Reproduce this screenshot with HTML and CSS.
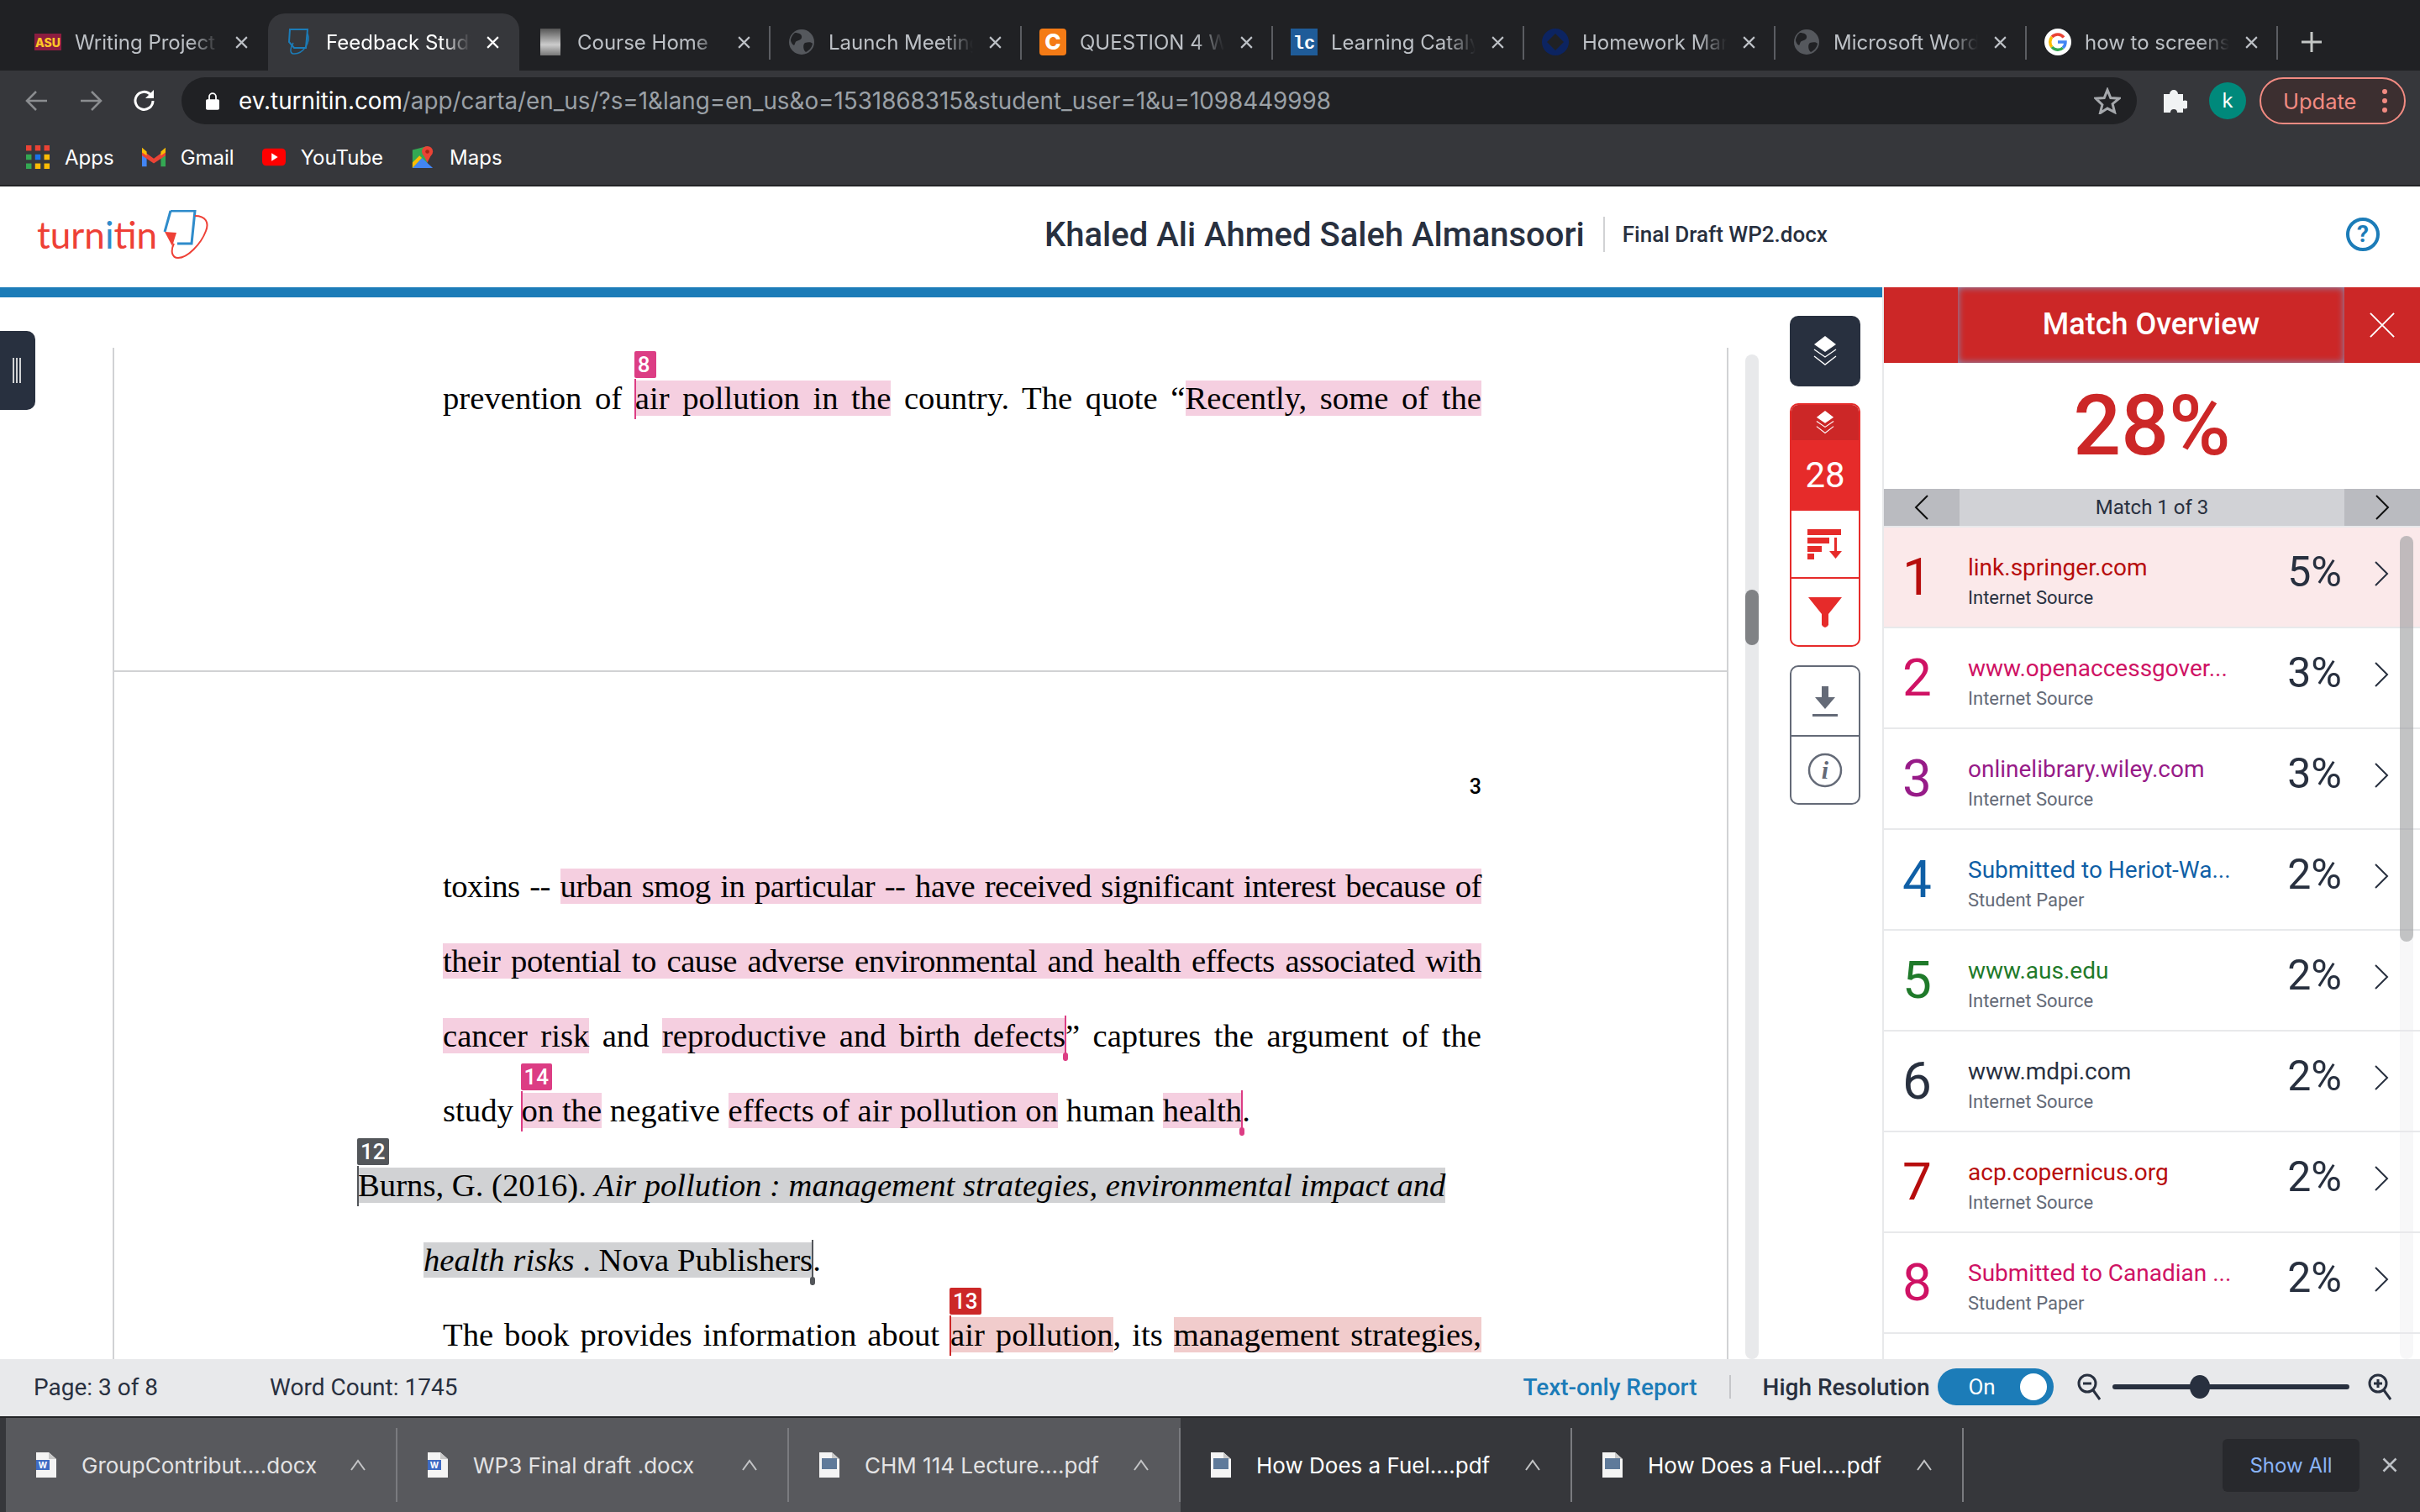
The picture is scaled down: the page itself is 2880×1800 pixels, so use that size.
FILE: index.html
```html
<!DOCTYPE html>
<html lang="en">
<head>
    <meta charset="UTF-8">
    <title>Feedback Studio</title>
    <link rel="stylesheet" href="styles.css">
</head>
<body>
    <svg class="defs" width="0" height="0">
        <symbol id="i-x" viewBox="0 0 16 16"><path d="M2 2l12 12M14 2L2 14" fill="none" stroke="currentColor" stroke-width="2"/></symbol>
        <symbol id="i-globe" viewBox="0 0 32 32"><circle cx="16" cy="16" r="15" fill="#55585d"/><path d="M8 5c5 0 9 2 8 6s-7 2-8 7-5-2-5-4 2-7 5-9zM20 17c4-1 8-1 9 1-1 5-4 8-8 10-3-2-4-9-1-11z" fill="#202124"/></symbol>
        <symbol id="i-chev" viewBox="0 0 20 32"><path d="M3 2l14 14L3 30" fill="none" stroke="currentColor" stroke-width="2"/></symbol>
        <symbol id="i-layers" viewBox="0 0 28 36"><path d="M14 0l13 10-13 9-13-9z" fill="#fff"/><path d="M1 16l13 9 13-9M1 24l13 10 13-10" fill="none" stroke="#fff" stroke-width="1.4"/></symbol>
        <symbol id="i-doc" viewBox="0 0 24 30"><path d="M0 0h15l9 8v22H0z" fill="#f4f4f4"/><path d="M15 0l9 8h-9z" fill="#c9c9c9"/></symbol>
    </svg>

    <!-- browser chrome -->
    <header class="chrome">
        <div class="tabstrip">
            <div class="tab">
                <svg class="favicon" viewBox="0 0 32 32"><rect y="6" width="32" height="20" fill="#8c1d40"/><text x="16" y="22" text-anchor="middle" class="asu-mark">ASU</text></svg>
                <span class="tab-title">Writing Project</span>
                <svg class="tab-x"><use href="#i-x"/></svg>
            </div>
            <div class="tab active">
                <svg class="favicon" viewBox="0 0 32 32"><path d="M5 1h21l-2 22H10L4 16z" fill="none" stroke="#1c7cb8" stroke-width="2"/><path d="M26 6c4 10-5 25-17 24-5-1-3-8 0-13" fill="none" stroke="#1c7cb8" stroke-width="1.5"/></svg>
                <span class="tab-title">Feedback Studio</span>
                <svg class="tab-x"><use href="#i-x"/></svg>
            </div>
            <div class="tab">
                <svg class="favicon" viewBox="0 0 32 32"><defs><linearGradient id="g-book" x1="0" y1="0" x2="0" y2="1"><stop offset="0" stop-color="#555"/><stop offset=".6" stop-color="#ccc"/><stop offset="1" stop-color="#777"/></linearGradient></defs><rect x="4" y="0" width="24" height="32" fill="url(#g-book)"/></svg>
                <span class="tab-title">Course Home</span>
                <svg class="tab-x"><use href="#i-x"/></svg>
            </div>
            <div class="tab">
                <svg class="favicon"><use href="#i-globe"/></svg>
                <span class="tab-title">Launch Meeting</span>
                <svg class="tab-x"><use href="#i-x"/></svg>
            </div>
            <div class="tab">
                <svg class="favicon" viewBox="0 0 32 32"><rect width="32" height="32" rx="4" fill="#f47b16"/><text x="16" y="25" text-anchor="middle" class="c-mark">C</text></svg>
                <span class="tab-title">QUESTION 4 WP</span>
                <svg class="tab-x"><use href="#i-x"/></svg>
            </div>
            <div class="tab">
                <svg class="favicon" viewBox="0 0 32 32"><rect width="32" height="32" fill="#1f5c99"/><text x="16" y="24" text-anchor="middle" class="lc-mark">lc</text></svg>
                <span class="tab-title">Learning Catalytics</span>
                <svg class="tab-x"><use href="#i-x"/></svg>
            </div>
            <div class="tab">
                <svg class="favicon" viewBox="0 0 32 32"><circle cx="16" cy="16" r="16" fill="#0c2461"/><path d="M16 6l10 10-10 10L6 16z" fill="#202124"/></svg>
                <span class="tab-title">Homework Market</span>
                <svg class="tab-x"><use href="#i-x"/></svg>
            </div>
            <div class="tab">
                <svg class="favicon"><use href="#i-globe"/></svg>
                <span class="tab-title">Microsoft Word</span>
                <svg class="tab-x"><use href="#i-x"/></svg>
            </div>
            <div class="tab">
                <svg class="favicon" viewBox="0 0 32 32"><circle cx="16" cy="16" r="16" fill="#fff"/><path d="M23 10.500A9 9 0 0 0 9 10" fill="none" stroke="#ea4335" stroke-width="3.500"/><path d="M9 10a9 9 0 0 0 0 12" fill="none" stroke="#fbbc05" stroke-width="3.500"/><path d="M9 22a9 9 0 0 0 13 1" fill="none" stroke="#34a853" stroke-width="3.500"/><path d="M22 23a9 9 0 0 0 3-7h-9" fill="none" stroke="#4285f4" stroke-width="3.500"/></svg>
                <span class="tab-title">how to screenshot</span>
                <svg class="tab-x"><use href="#i-x"/></svg>
            </div>
            <svg class="new-tab" viewBox="0 0 24 24"><path d="M12 0v24M0 12h24" stroke="#c4c7c5" stroke-width="3"/></svg>
        </div>

        <div class="toolbar">
            <svg class="nav-icon dim" viewBox="0 0 28 28"><path d="M26 14H3M13 3L2 14l11 11" fill="none" stroke="currentColor" stroke-width="2.500"/></svg>
            <svg class="nav-icon dim" viewBox="0 0 28 28"><path d="M2 14h23M15 3l11 11-11 11" fill="none" stroke="currentColor" stroke-width="2.500"/></svg>
            <svg class="nav-icon" viewBox="0 0 28 28"><path d="M24 14a10.500 10.500 0 1 1-3-7.500" fill="none" stroke="currentColor" stroke-width="3"/><path d="M25 1v10H15z" fill="currentColor"/></svg>
            <div class="omnibox">
                <svg class="lock" viewBox="0 0 18 24"><path d="M4.500 11V6.500a4.500 4.500 0 0 1 9 0V11" fill="none" stroke="#fff" stroke-width="2"/><rect x="0" y="10" width="18" height="14" rx="2" fill="#fff"/></svg>
                <span class="url"><b>ev.turnitin.com</b>/app/carta/en_us/?s=1&amp;lang=en_us&amp;o=1531868315&amp;student_user=1&amp;u=1098449998</span>
                <svg class="star" viewBox="0 0 32 32"><path d="M16 3l3.800 9.500 10.200.7-7.900 6.500 2.500 9.900L16 25.100l-8.600 5.500 2.500-9.900L2 13.200l10.200-.7z" fill="none" stroke="#a5a8ac" stroke-width="3"/></svg>
            </div>
            <svg class="puzzle" viewBox="0 0 30 32"><path d="M2 8h7a5 5 0 1 1 10 0h6v8a5 5 0 1 1 0 9v5h-7a4 4 0 0 0-8 0H2z" fill="#f1f3f4"/></svg>
            <span class="avatar">k</span>
            <div class="update">
                <span>Update</span>
                <span class="dots"><i></i><i></i><i></i></span>
            </div>
        </div>

        <div class="bookmarks">
            <div class="bookmark">
                <svg class="bm-icon" viewBox="0 0 26 26"><g fill="#ea4335"><rect width="6" height="6"/><rect x="10" width="6" height="6"/><rect x="20" width="6" height="6"/></g><g fill="#1a73e8"><rect y="10" width="6" height="6" fill="#34a853"/><rect x="10" y="10" width="6" height="6"/><rect x="20" y="10" width="6" height="6" fill="#fbbc05"/></g><g fill="#fbbc05"><rect y="20" width="6" height="6" fill="#34a853"/><rect x="10" y="20" width="6" height="6"/><rect x="20" y="20" width="6" height="6"/></g></svg>
                Apps
            </div>
            <div class="bookmark">
                <svg class="bm-icon" viewBox="0 0 30 24"><path d="M0 3v21h6V10z" fill="#4285f4"/><path d="M30 3v21h-6V10z" fill="#34a853"/><path d="M0 3l15 11L30 3v7L15 20 0 10z" fill="#ea4335"/><path d="M0 0l6 5v5L0 6zM30 0l-6 5v5l6-4z" fill="#fbbc05"/></svg>
                Gmail
            </div>
            <div class="bookmark">
                <svg class="bm-icon" viewBox="0 0 30 22"><rect width="30" height="22" rx="5" fill="#f00"/><path d="M12 6l8 5-8 5z" fill="#fff"/></svg>
                YouTube
            </div>
            <div class="bookmark">
                <svg class="bm-icon" viewBox="0 0 28 30"><path d="M1 6l19-5v26L1 29z" fill="#34a853"/><path d="M1 29l12-13 14 13z" fill="#4285f4"/><path d="M1 29l12-13-3-3L1 22z" fill="#fbbc05"/><circle cx="20" cy="8" r="7" fill="#ea4335"/><path d="M15 12l5 10 5-10z" fill="#ea4335"/><circle cx="20" cy="8" r="2.500" fill="#a52714"/></svg>
                Maps
            </div>
        </div>
    </header>

    <!-- turnitin header -->
    <div class="app-head">
        <div class="logo">
            <span class="logo-word">turn<em>i</em>tin</span>
            <svg class="logo-mark" viewBox="0 0 54 58"><path d="M9 1h29l-4 39H17" fill="none" stroke="#2f8ccb" stroke-width="3"/><path d="M9 1L2 26" fill="none" stroke="#2f8ccb" stroke-width="3"/><path d="M2 26l14 1-5 16z" fill="#ee4036"/><path d="M38 7c13 0 17 8 13 18-6 16-22 32-33 32-8 0-9-9-5-17" fill="none" stroke="#ee4036" stroke-width="2"/></svg>
        </div>
        <div class="doc-title">
            <span class="author">Khaled Ali Ahmed Saleh Almansoori</span>
            <span class="filename">Final Draft WP2.docx</span>
        </div>
        <span class="help">?</span>
    </div>

    <div class="workspace">
        <div class="handle"><i></i><i></i><i></i></div>

        <main class="doc-area">
            <div class="paper">
                <section class="page-end">
                    <p class="line"><span>prevention of</span> <span class="match pink"><span class="badge pink-b">8</span>air pollution in the</span> country. The quote “<span class="match pink plain">Recently, some of the</span></p>
                </section>
                <section class="page-next">
                    <div class="page-no">3</div>
                    <p class="line tight">toxins -- <span class="match pink plain">urban smog in particular -- have received significant interest because of</span></p>
                    <p class="line tight"><span class="match pink plain">their potential to cause adverse environmental and health effects associated with</span></p>
                    <p class="line"><span class="match pink plain">cancer risk</span> and <span class="match pink plain end">reproductive and birth defects</span>” captures the argument of the</p>
                    <p class="line free">study <span class="match pink"><span class="badge pink-b">14</span>on the</span> negative <span class="match pink plain">effects of air pollution on</span> human <span class="match pink plain end">health</span>.</p>
                    <p class="line free ref"><span class="match grey"><span class="badge grey-b">12</span>Burns, G. (2016). <i>Air pollution : management strategies, environmental impact and</i></span></p>
                    <p class="line free ref-2"><span class="match grey plain end"><i>health risks</i> . Nova Publishers</span>.</p>
                    <p class="line">The book provides information about <span class="match red"><span class="badge red-b">13</span>air pollution</span>, its <span class="match red plain">management strategies,</span></p>
                </section>
            </div>
            <div class="doc-scroll"><div class="doc-thumb"></div></div>
            <div class="rail">
                <div class="rail-btn rail-dark"><svg class="rail-layers"><use href="#i-layers"/></svg></div>
                <div class="rail-group rail-red">
                    <div class="rail-cell cell-layers"><svg class="rail-layers small"><use href="#i-layers"/></svg></div>
                    <div class="rail-cell cell-score">28</div>
                    <div class="rail-cell">
                        <svg class="rail-svg" viewBox="0 0 42 36"><g fill="#e62b2a"><rect width="40" height="7"/><rect y="10" width="26" height="7"/><rect y="20" width="17" height="7"/><rect y="29" width="8" height="7"/><path d="M32 10h3v16h6l-7.500 9L26 26h6z"/></g></svg>
                    </div>
                    <div class="rail-cell">
                        <svg class="rail-svg" viewBox="0 0 42 36"><path d="M1 0h40L25 20v13q-4 6-8 0V20z" fill="#e62b2a"/></svg>
                    </div>
                </div>
                <div class="rail-group rail-grey">
                    <div class="rail-cell">
                        <svg class="rail-svg" viewBox="0 0 32 36"><path d="M12 0h8v13h8L16 27 4 13h8z" fill="#646a77"/><rect x="1" y="33" width="30" height="3" fill="#646a77"/></svg>
                    </div>
                    <div class="rail-cell">
                        <svg class="rail-info" viewBox="0 0 42 42"><circle cx="21" cy="21" r="19" fill="none" stroke="#646a77" stroke-width="2.500"/><text x="21" y="31" text-anchor="middle" class="info-i">i</text></svg>
                    </div>
                </div>
            </div>
        </main>

        <aside class="panel">
            <div class="panel-head">
                <div class="panel-title">Match Overview</div>
                <svg class="panel-close" viewBox="0 0 32 32"><path d="M1 1l30 30M31 1L1 31" fill="none" stroke="#fff" stroke-width="2"/></svg>
            </div>
            <div class="score">28%</div>
            <div class="pager">
                <div class="pager-btn"><svg class="pager-chev flip"><use href="#i-chev"/></svg></div>
                <div class="pager-label">Match 1 of 3</div>
                <div class="pager-btn"><svg class="pager-chev"><use href="#i-chev"/></svg></div>
            </div>
            <div class="matches">
                <div class="match-row current c1"><span class="num">1</span><div class="info"><div class="name">link.springer.com</div><div class="src">Internet Source</div></div><span class="pct">5%</span><svg class="row-chev"><use href="#i-chev"/></svg></div>
                <div class="match-row c2"><span class="num">2</span><div class="info"><div class="name">www.openaccessgover...</div><div class="src">Internet Source</div></div><span class="pct">3%</span><svg class="row-chev"><use href="#i-chev"/></svg></div>
                <div class="match-row c3"><span class="num">3</span><div class="info"><div class="name">onlinelibrary.wiley.com</div><div class="src">Internet Source</div></div><span class="pct">3%</span><svg class="row-chev"><use href="#i-chev"/></svg></div>
                <div class="match-row c4"><span class="num">4</span><div class="info"><div class="name">Submitted to Heriot-Wa...</div><div class="src">Student Paper</div></div><span class="pct">2%</span><svg class="row-chev"><use href="#i-chev"/></svg></div>
                <div class="match-row c5"><span class="num">5</span><div class="info"><div class="name">www.aus.edu</div><div class="src">Internet Source</div></div><span class="pct">2%</span><svg class="row-chev"><use href="#i-chev"/></svg></div>
                <div class="match-row c6"><span class="num">6</span><div class="info"><div class="name">www.mdpi.com</div><div class="src">Internet Source</div></div><span class="pct">2%</span><svg class="row-chev"><use href="#i-chev"/></svg></div>
                <div class="match-row c7"><span class="num">7</span><div class="info"><div class="name">acp.copernicus.org</div><div class="src">Internet Source</div></div><span class="pct">2%</span><svg class="row-chev"><use href="#i-chev"/></svg></div>
                <div class="match-row c8"><span class="num">8</span><div class="info"><div class="name">Submitted to Canadian ...</div><div class="src">Student Paper</div></div><span class="pct">2%</span><svg class="row-chev"><use href="#i-chev"/></svg></div>
                <div class="list-scroll"><div class="list-thumb"></div></div>
            </div>
        </aside>
    </div>

    <!-- status bar -->
    <div class="statusbar">
        <span class="stat-page">Page: 3 of 8</span>
        <span class="stat-words">Word Count: 1745</span>
        <span class="text-only">Text-only Report</span>
        <span class="stat-sep"></span>
        <span class="hi-res">High Resolution</span>
        <div class="toggle"><span>On</span><i></i></div>
        <svg class="zoom-icon" viewBox="0 0 28 32"><circle cx="12" cy="12" r="10" fill="none" stroke="#28303f" stroke-width="3"/><path d="M7 12h10" stroke="#28303f" stroke-width="3"/><path d="M19 20l8 11" stroke="#28303f" stroke-width="3"/></svg>
        <div class="slider"><i></i></div>
        <svg class="zoom-icon" viewBox="0 0 28 32"><circle cx="12" cy="12" r="10" fill="none" stroke="#28303f" stroke-width="3"/><path d="M7 12h10M12 7v10" stroke="#28303f" stroke-width="3"/><path d="M19 20l8 11" stroke="#28303f" stroke-width="3"/></svg>
    </div>

    <!-- downloads -->
    <footer class="downloads">
        <div class="dl-item lit">
            <svg class="dl-icon"><use href="#i-doc"/></svg><span class="word-badge">W</span>
            <span class="dl-name">GroupContribut....docx</span>
            <svg class="caret" viewBox="0 0 20 14"><path d="M2 13l8-11 8 11" fill="none" stroke="currentColor" stroke-width="2"/></svg>
        </div>
        <div class="dl-item lit">
            <svg class="dl-icon"><use href="#i-doc"/></svg><span class="word-badge">W</span>
            <span class="dl-name">WP3 Final draft .docx</span>
            <svg class="caret" viewBox="0 0 20 14"><path d="M2 13l8-11 8 11" fill="none" stroke="currentColor" stroke-width="2"/></svg>
        </div>
        <div class="dl-item lit">
            <svg class="dl-icon"><use href="#i-doc"/></svg><span class="pdf-badge"></span>
            <span class="dl-name">CHM 114 Lecture....pdf</span>
            <svg class="caret" viewBox="0 0 20 14"><path d="M2 13l8-11 8 11" fill="none" stroke="currentColor" stroke-width="2"/></svg>
        </div>
        <div class="dl-item">
            <svg class="dl-icon"><use href="#i-doc"/></svg><span class="pdf-badge"></span>
            <span class="dl-name">How Does a Fuel....pdf</span>
            <svg class="caret" viewBox="0 0 20 14"><path d="M2 13l8-11 8 11" fill="none" stroke="currentColor" stroke-width="2"/></svg>
        </div>
        <div class="dl-item">
            <svg class="dl-icon"><use href="#i-doc"/></svg><span class="pdf-badge"></span>
            <span class="dl-name">How Does a Fuel....pdf</span>
            <svg class="caret" viewBox="0 0 20 14"><path d="M2 13l8-11 8 11" fill="none" stroke="currentColor" stroke-width="2"/></svg>
        </div>
        <div class="show-all">Show All</div>
        <svg class="dl-close"><use href="#i-x"/></svg>
    </footer>
</body>
</html>
```

FILE: styles.css
```css
* {
    box-sizing: border-box;
}
html, body {
    margin: 0;
    height: 100%;
}
body {
    width: 2880px;
    height: 1800px;
    display: flex;
    flex-direction: column;
    overflow: hidden;
    font-family: Roboto, sans-serif;
    background-color: #fff;
    color: #28303f;
}
.defs {
    position: absolute;
}

/* Browser chrome */
.chrome {
    height: 222px;
    flex: none;
    background-color: #36373b;
    border-bottom: 2px solid #232426;
    font-family: Inter, sans-serif;
    color: #fff;
}
.tabstrip {
    height: 84px;
    display: flex;
    align-items: flex-end;
    padding-left: 20px;
    background-color: #202124;
}
.tab {
    position: relative;
    width: 299px;
    height: 68px;
    display: flex;
    align-items: center;
    padding: 0 23px 0 21px;
    color: #bdc1c6;
}
.tab::after {
    content: "";
    position: absolute;
    right: 0;
    top: 15px;
    height: 40px;
    border-right: 2px solid #5b5d62;
}
.tab.active {
    background-color: #36373b;
    border-radius: 20px 20px 0 0;
    color: #fff;
}
.tab.active::after,
.tab:first-child::after {
    display: none;
}
.favicon {
    width: 32px;
    height: 32px;
    flex: none;
}
.tab-title {
    width: 172px;
    margin-left: 16px;
    font-size: 24px;
    white-space: nowrap;
    overflow: hidden;
    -webkit-mask-image: linear-gradient(to right, #000 80%, transparent);
    mask-image: linear-gradient(to right, #000 80%, transparent);
}
.tab-x {
    width: 17px;
    height: 17px;
    margin-left: auto;
}
.new-tab {
    width: 24px;
    height: 24px;
    margin: 0 0 22px 28px;
    align-self: flex-end;
}
.asu-mark {
    font: 800 14px Inter, sans-serif;
    fill: #ffc627;
}
.c-mark {
    font: 800 26px Inter, sans-serif;
    fill: #fff;
}
.lc-mark {
    font: 700 22px "Liberation Mono", monospace;
    fill: #fff;
}

.toolbar {
    height: 64px;
    display: flex;
    align-items: flex-start;
    padding: 8px 17px 0 30px;
}
.nav-icon {
    width: 28px;
    height: 28px;
    margin: 14px 36px 0 0;
    flex: none;
    color: #fff;
}
.nav-icon.dim {
    color: #8b8d90;
}
.omnibox {
    width: 2327px;
    height: 56px;
    margin-left: -6px;
    display: flex;
    align-items: center;
    padding: 0 19px 0 29px;
    background-color: #202124;
    border-radius: 28px;
}
.lock {
    width: 16px;
    height: 24px;
    flex: none;
}
.url {
    margin-left: 23px;
    font-size: 27.8px;
    color: #9aa0a6;
    white-space: nowrap;
}
.url b {
    font-weight: 400;
    color: #fff;
}
.star {
    width: 32px;
    height: 32px;
    margin-left: auto;
}
.puzzle {
    width: 30px;
    height: 32px;
    margin: 12px 0 0 30px;
    flex: none;
}
.avatar {
    width: 44px;
    height: 44px;
    margin: 6px 0 0 26px;
    flex: none;
    border-radius: 50%;
    background-color: #00897b;
    font-size: 24px;
    line-height: 44px;
    text-align: center;
}
.update {
    width: 174px;
    height: 56px;
    margin-left: 16px;
    flex: none;
    display: flex;
    align-items: center;
    padding: 0 20px 0 26px;
    border: 2px solid #f28b82;
    border-radius: 28px;
    background-color: #3c2f30;
    color: #f28b82;
    font-size: 25.5px;
}
.dots {
    margin-left: auto;
    display: flex;
    flex-direction: column;
    gap: 5px;
}
.dots i {
    width: 6px;
    height: 6px;
    border-radius: 50%;
    background-color: #f28b82;
}

.bookmarks {
    height: 72px;
    display: flex;
    align-items: center;
    padding: 6px 0 0 31px;
    gap: 33px;
    font-size: 24px;
}
.bookmark {
    display: flex;
    align-items: center;
    gap: 18px;
}
.bm-icon {
    width: 28px;
    height: 28px;
    flex: none;
}

/* Turnitin header */
.app-head {
    position: relative;
    height: 132px;
    flex: none;
    display: flex;
    align-items: center;
    padding-bottom: 6px;
    border-bottom: 12px solid #1c7cb8;
}
.logo {
    width: 251px;
    display: flex;
    align-items: center;
    margin-left: 44px;
}
.logo-word {
    font: 400 44px Lato, sans-serif;
    color: #ee4036;
}
.logo-word em {
    font-style: normal;
    color: #2f8ccb;
}
.logo-mark {
    width: 54px;
    height: 58px;
    margin-left: 7px;
}
.doc-title {
    display: flex;
    align-items: center;
    margin-left: 948px;
}
.author {
    font-size: 40px;
    font-weight: 500;
    white-space: nowrap;
}
.filename {
    margin-left: 22px;
    padding-left: 21px;
    border-left: 2px solid #d1d2d4;
    font-size: 26px;
    font-weight: 500;
    line-height: 42px;
    white-space: nowrap;
}
.help {
    width: 40px;
    height: 40px;
    margin-left: auto;
    margin-right: 48px;
    border: 4px solid #1c7cb8;
    border-radius: 50%;
    color: #1c7cb8;
    font-size: 28px;
    font-weight: 700;
    line-height: 32px;
    text-align: center;
}

.workspace {
    position: relative;
    flex: none;
    height: 1264px;
    display: flex;
}
.handle {
    position: absolute;
    left: 0;
    top: 40px;
    width: 42px;
    height: 94px;
    display: flex;
    justify-content: center;
    gap: 2px;
    padding-top: 32px;
    padding-right: 2px;
    background-color: #28303f;
    border-radius: 0 10px 10px 0;
}
.handle i {
    width: 2px;
    height: 30px;
    background-color: #d1d2d4;
}

/* Document */
.doc-area {
    width: 2240px;
    flex: none;
    display: flex;
    align-items: flex-start;
    padding: 60px 0 0 134px;
    overflow: hidden;
}
.paper {
    width: 1923px;
    height: 1204px;
    flex: none;
    border-left: 2px solid #d1d2d4;
    border-right: 2px solid #d1d2d4;
    color: #000;
    font-family: "Liberation Serif", serif;
    font-size: 38.7px;
}
.page-end {
    height: 386px;
    padding: 16px 0 0 391px;
    border-bottom: 2px solid #d1d2d4;
}
.page-next {
    padding-left: 391px;
}
.page-no {
    width: 1236px;
    height: 211px;
    padding-top: 122px;
    font: 500 25px Roboto, sans-serif;
    text-align: right;
}
.line {
    width: 1236px;
    height: 89px;
    margin: 0;
    line-height: 89px;
    text-align: justify;
    text-align-last: justify;
}
.line.tight {
    letter-spacing: -0.5px;
    word-spacing: -3px;
}
.line.free {
    text-align-last: left;
}
.line.ref {
    width: auto;
    margin-left: -101px;
}
.line.ref-2 {
    width: auto;
    margin-left: -23px;
}
.match {
    position: relative;
}
.pink {
    background-color: #f5cfe0;
    --edge: #dc3d84;
}
.red {
    background-color: #f1cccc;
    --edge: #cc2727;
}
.grey {
    background-color: #d1d2d4;
    --edge: #53565a;
}
.match:not(.plain)::before {
    content: "";
    position: absolute;
    left: -1px;
    top: -2px;
    height: 48px;
    width: 2px;
    background-color: var(--edge);
}
/* closing marker of a match: a thin line with a dot at its foot */
.end::after {
    content: "";
    position: absolute;
    right: -1px;
    top: -3px;
    height: 54px;
    width: 2px;
    background-color: var(--edge);
}
.end::before {
    content: "";
    position: absolute;
    right: -3px;
    top: 41px;
    width: 6px;
    height: 10px;
    border-radius: 3px;
    background-color: var(--edge);
}
.badge {
    position: absolute;
    left: -1px;
    bottom: 100%;
    margin-bottom: 3px;
    min-width: 26px;
    height: 32px;
    padding: 0 4px;
    border-radius: 2px;
    color: #fff;
    font: 500 26px/32px Roboto, sans-serif;
    letter-spacing: 0;
    text-align: center;
}
.pink-b {
    background-color: #dc3d84;
}
.red-b {
    background-color: #cc2727;
}
.grey-b {
    background-color: #53565a;
}
.doc-scroll {
    width: 16px;
    height: 1196px;
    margin: 8px 0 0 20px;
    flex: none;
    padding-top: 280px;
    background-color: #e8e9eb;
    border-radius: 8px;
}
.doc-thumb {
    height: 66px;
    background-color: #808285;
    border-radius: 8px;
}
.rail {
    width: 84px;
    margin: -38px 0 0 37px;
    flex: none;
    display: flex;
    flex-direction: column;
}
.rail-btn {
    height: 84px;
    display: flex;
    align-items: center;
    justify-content: center;
    border-radius: 10px;
}
.rail-dark {
    background-color: #28303f;
}
.rail-layers {
    width: 28px;
    height: 36px;
}
.rail-layers.small {
    width: 22px;
    height: 28px;
}
.rail-group {
    margin-top: 20px;
    border: 2px solid;
    border-radius: 10px;
    overflow: hidden;
}
.rail-red {
    border-color: #e62b2a;
}
.rail-grey {
    margin-top: 22px;
    border-color: #646a77;
}
.rail-cell {
    height: 81px;
    display: flex;
    align-items: center;
    justify-content: center;
}
.rail-cell + .rail-cell {
    border-top: 2px solid;
    border-color: inherit;
}
.rail-red .cell-layers {
    height: 42px;
    background-color: #cc2727;
}
.rail-red .cell-score {
    height: 82px;
    border-top: 0;
    background-color: #e62b2a;
    color: #fff;
    font-size: 42px;
}
.rail-svg {
    width: 42px;
    height: 36px;
}
.rail-info {
    width: 42px;
    height: 42px;
}
.info-i {
    font: italic 700 30px "Liberation Serif", serif;
    fill: #646a77;
}

/* Match panel */
.panel {
    width: 640px;
    margin-top: -12px;
    flex: none;
    display: flex;
    flex-direction: column;
    border-left: 2px solid #e8e9eb;
    z-index: 1;
    background-color: #fff;
    overflow: hidden;
}
.panel-head {
    height: 90px;
    margin-left: -2px;
    flex: none;
    display: flex;
    align-items: center;
    background-color: #cc2727;
    color: #fff;
}
.panel-title {
    width: 460px;
    height: 90px;
    margin-left: 90px;
    font-size: 36px;
    font-weight: 500;
    line-height: 88px;
    text-align: center;
    box-shadow: inset 0 0 8px #7d9ac4;
}
.panel-close {
    width: 30px;
    height: 30px;
    margin-left: 30px;
}
.score {
    height: 150px;
    flex: none;
    color: #cc2727;
    font-size: 100px;
    font-weight: 500;
    line-height: 150px;
    text-align: center;
}
.pager {
    height: 46px;
    flex: none;
    display: flex;
    border-bottom: 2px solid #e8e9eb;
    background-color: #d1d2d6;
}
.pager-btn {
    width: 90px;
    display: flex;
    align-items: center;
    justify-content: center;
    background-color: #babbc0;
}
.pager-chev {
    width: 20px;
    height: 32px;
    color: #111;
}
.pager-chev.flip {
    transform: scaleX(-1);
}
.pager-label {
    flex: 1;
    font-size: 24px;
    line-height: 44px;
    text-align: center;
}
.matches {
    position: relative;
    flex: 1;
    min-height: 0;
}
.match-row {
    height: 120px;
    display: flex;
    align-items: center;
    padding-left: 22px;
    border-bottom: 2px solid #e8e9eb;
}
.match-row.current {
    background-color: #fbe9ea;
}
.num {
    width: 78px;
    flex: none;
    font-size: 62px;
    line-height: 1;
}
.info {
    width: 338px;
    padding-top: 10px;
    flex: none;
}
.name {
    font-size: 28px;
    line-height: 36px;
    white-space: nowrap;
}
.src {
    margin-top: 4px;
    color: #646a77;
    font-size: 22px;
    line-height: 28px;
}
.current .src {
    color: #28303f;
}
.pct {
    width: 107px;
    margin-top: -12px;
    flex: none;
    font-size: 50px;
    text-align: right;
}
.row-chev {
    width: 20px;
    height: 32px;
    margin: -8px 0 0 37px;
    flex: none;
    color: #28303f;
}
.c1 .num, .c1 .name { color: #b70d0d; }
.c2 .num, .c2 .name { color: #cf1264; }
.c3 .num, .c3 .name { color: #971b88; }
.c4 .num, .c4 .name { color: #0f5fa6; }
.c5 .num, .c5 .name { color: #1f7a2a; }
.c6 .num, .c6 .name { color: #28303f; }
.c7 .num, .c7 .name { color: #b70d0d; }
.c8 .num, .c8 .name { color: #cf1264; }
.list-scroll {
    position: absolute;
    right: 8px;
    top: 10px;
    bottom: 0;
    width: 16px;
    background-color: rgba(232, 233, 235, 0.35);
    border-radius: 8px;
}
.list-thumb {
    height: 483px;
    background-color: rgba(128, 130, 133, 0.45);
    border-radius: 8px;
}

/* Status bar */
.statusbar {
    height: 70px;
    flex: none;
    display: flex;
    align-items: center;
    padding: 0 0 2px 40px;
    background-color: #e8e9eb;
    border-bottom: 2px solid #232426;
    font-size: 28px;
}
.stat-words {
    margin-left: 133px;
}
.text-only {
    margin-left: 1268px;
    color: #1c7cb8;
    font-weight: 500;
}
.stat-sep {
    width: 2px;
    height: 28px;
    margin: 0 38px;
    background-color: #c5c6c9;
}
.hi-res {
    font-weight: 500;
}
.toggle {
    width: 138px;
    height: 44px;
    margin-left: 10px;
    display: flex;
    align-items: center;
    justify-content: space-between;
    padding: 0 8px 0 36px;
    background-color: #1c7cb8;
    border-radius: 22px;
    color: #fff;
    font-size: 26px;
}
.toggle i {
    width: 32px;
    height: 32px;
    border-radius: 50%;
    background-color: #fff;
}
.zoom-icon {
    width: 28px;
    height: 32px;
    margin-left: 28px;
    flex: none;
}
.slider {
    position: relative;
    width: 282px;
    height: 6px;
    margin-left: 14px;
    background-color: #28303f;
    border-radius: 3px;
}
.slider i {
    position: absolute;
    left: 92px;
    top: -11px;
    width: 24px;
    height: 28px;
    border-radius: 50%;
    background-color: #28303f;
}
.slider + .zoom-icon {
    margin-left: 22px;
}

/* Downloads bar */
.downloads {
    height: 112px;
    flex: none;
    display: flex;
    align-items: center;
    padding-left: 7px;
    background-color: #36373b;
    color: #fff;
    font-family: Inter, sans-serif;
    font-size: 26px;
}
.dl-item {
    position: relative;
    width: 466px;
    height: 100%;
    flex: none;
    display: flex;
    align-items: center;
    padding: 0 37px 0 36px;
}
.dl-item.lit {
    background-color: #58595d;
    color: #e3e3e4;
}
.dl-item::after {
    content: "";
    position: absolute;
    right: 0;
    top: 12px;
    bottom: 12px;
    border-right: 2px solid #7a7b7f;
}
.dl-icon {
    width: 24px;
    height: 30px;
    flex: none;
}
.word-badge {
    position: absolute;
    left: 36px;
    width: 16px;
    height: 12px;
    background-color: #3f6cc4;
    color: #fff;
    font-size: 10px;
    font-weight: 700;
    line-height: 12px;
    text-align: center;
}
.pdf-badge {
    position: absolute;
    left: 39px;
    width: 18px;
    height: 13px;
    margin-top: -3px;
    background-color: #5f7a9a;
}
.dl-name {
    margin-left: 30px;
    white-space: nowrap;
}
.caret {
    width: 20px;
    height: 14px;
    margin-left: auto;
    flex: none;
    color: #c3c4c6;
}
.show-all {
    width: 163px;
    height: 63px;
    margin-left: auto;
    background-color: #28292d;
    border-radius: 6px;
    color: #8ab4f8;
    font-size: 24px;
    line-height: 63px;
    text-align: center;
}
.dl-close {
    width: 20px;
    height: 20px;
    margin: 0 26px;
    flex: none;
    color: #bdc1c6;
}
```
